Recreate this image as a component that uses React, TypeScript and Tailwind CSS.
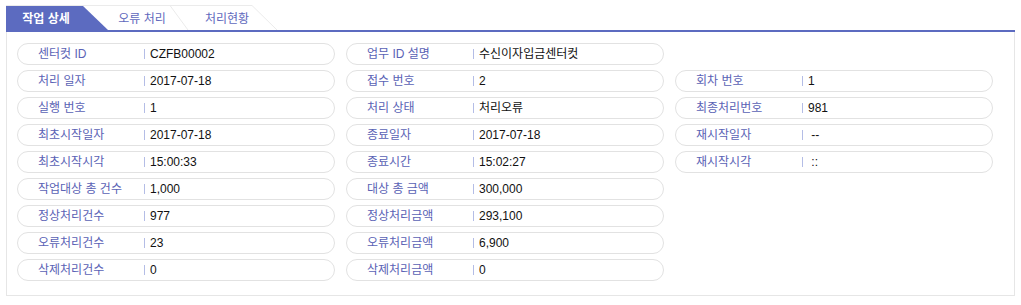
const rows: [string, string][][] = [
  [["센터컷 ID", "CZFB00002"], ["업무 ID 설명", "수신이자입금센터컷"]],
  [["처리 일자", "2017-07-18"], ["접수 번호", "2"], ["회차 번호", "1"]],
  [["실행 번호", "1"], ["처리 상태", "처리오류"], ["최종처리번호", "981"]],
  [["최초시작일자", "2017-07-18"], ["종료일자", "2017-07-18"], ["재시작일자", " --"]],
  [["최초시작시각", "15:00:33"], ["종료시간", "15:02:27"], ["재시작시각", " ::"]],
  [["작업대상 총 건수", "1,000"], ["대상 총 금액", "300,000"]],
  [["정상처리건수", "977"], ["정상처리금액", "293,100"]],
  [["오류처리건수", "23"], ["오류처리금액", "6,900"]],
  [["삭제처리건수", "0"], ["삭제처리금액", "0"]],
];

function Field({ label, value }: { label: string; value: string }) {
  return (
    <div className="flex h-[22px] items-center rounded-full border border-[#e2e2e2] bg-white pl-[20px]">
      <span className="w-[106px] shrink-0 text-[#5a62b5]">{label}</span>
      <span className="h-[10px] w-px shrink-0 bg-[#b4bde6]" />
      <span className="ml-[5px] whitespace-pre text-[#111]">{value}</span>
    </div>
  );
}

function Tabs() {
  return (
    <div className="relative mx-[6px] mt-[5px] h-[25px]">
      <svg className="absolute inset-0" width="300" height="25" viewBox="0 0 300 25">
        <path d="M0 0.5H246" stroke="#ebebeb" fill="none" />
        <polygon points="0,1 77,1 102,25 0,25" fill="#5c6bc0" />
        <path d="M164 0.5L182 25M246 0.5L271 25" stroke="#ebebeb" fill="none" />
      </svg>
      <div className="relative flex h-full items-center pt-[3px] text-[12px]">
        <span className="w-[80px] text-center font-bold text-white">작업 상세</span>
        <span className="w-[112px] text-center text-[#5f69bd]">오류 처리</span>
        <span className="w-[58px] text-center text-[#5f69bd]">처리현황</span>
      </div>
    </div>
  );
}

export default function App() {
  return (
    <div className="h-[305px] w-[1021px] bg-white font-['Liberation_Sans','Noto_Sans_CJK_KR',sans-serif] text-[12px]">
      <Tabs />
      <div className="mx-[6px] h-[2px] bg-[#5c6bc0]" />
      <div className="mx-[6px] h-[264px] border border-t-0 border-[#e6e6e6] pl-[10px] pt-[11px]">
        <div className="grid grid-cols-[318px_318px_318px] gap-x-[11px] gap-y-[5px]">
          {rows.map((row, i) => (
            <div key={i} className="contents">
              {[0, 1, 2].map((j) =>
                row[j] ? (
                  <Field key={j} label={row[j][0]} value={row[j][1]} />
                ) : (
                  <div key={j} />
                )
              )}
            </div>
          ))}
        </div>
      </div>
    </div>
  );
}
